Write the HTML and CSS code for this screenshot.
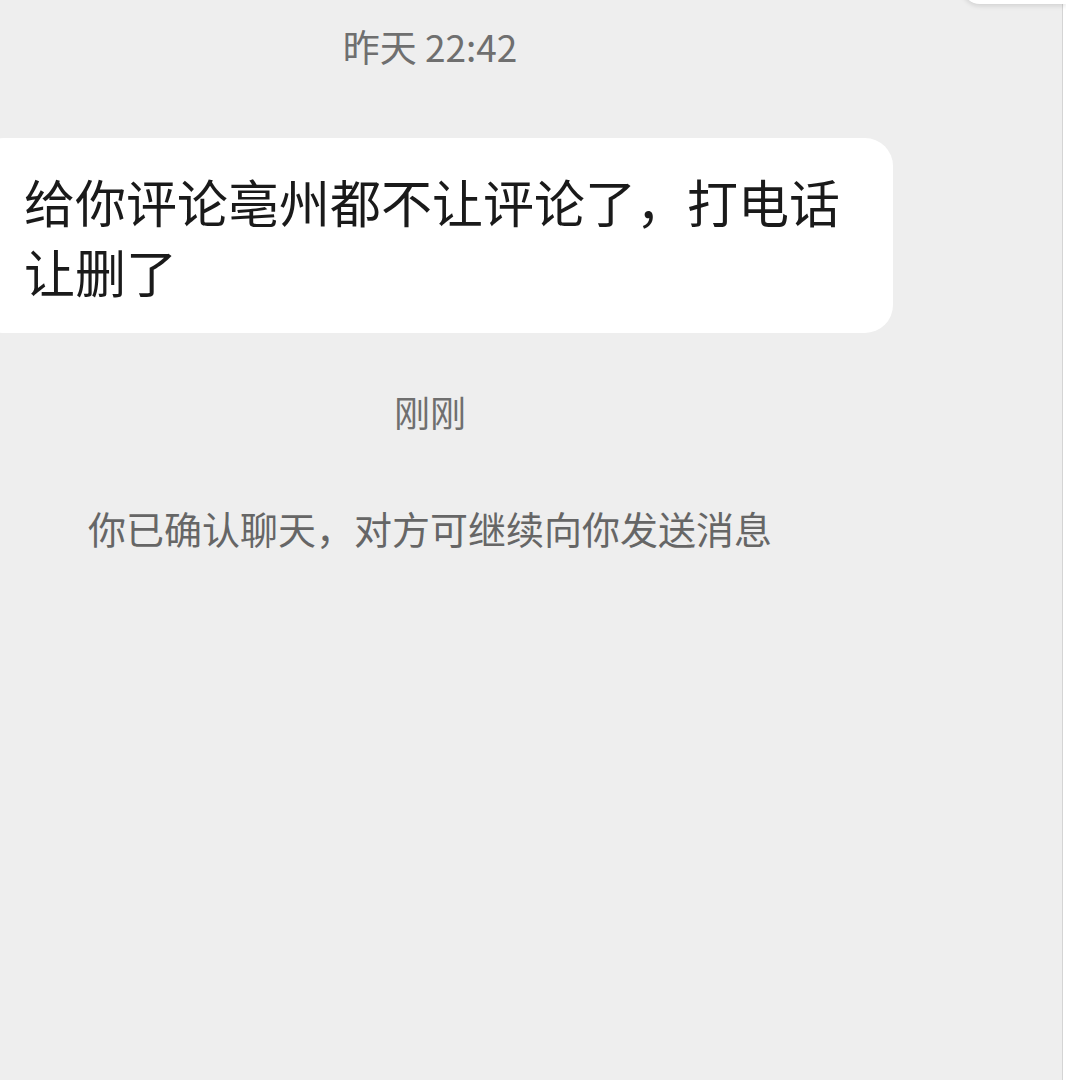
FILE: index.html
```html
<!DOCTYPE html>
<html lang="zh-CN">
<head>
    <meta charset="UTF-8">
    <meta name="viewport" content="width=device-width, initial-scale=1.0">
    <title>聊天</title>
    <link rel="stylesheet" href="styles.css">
</head>
<body>
    <div class="screen">
        <div class="chat">
            <div class="column">
                <p class="stamp">昨天 22:42</p>
                <div class="bubble">给你评论亳州都不让评论了，打电话让删了</div>
                <p class="stamp now">刚刚</p>
                <p class="notice">你已确认聊天，对方可继续向你发送消息</p>
            </div>
        </div>
        <div class="edge"></div>
        <div class="corner-card"></div>
    </div>
</body>
</html>
```

FILE: styles.css
```css
html, body {
    margin: 0;
    height: 100%;
    background: #eeeeee;
    overflow: hidden;
}
body {
    font-family: "Noto Sans CJK SC", "Noto Sans", sans-serif;
}
.screen {
    position: relative;
    display: flex;
    height: 1080px;
}
.chat {
    flex: 1;
    background: #eeeeee;
}
.column {
    width: 860px;
    padding-top: 24px;
    display: flex;
    flex-direction: column;
    align-items: center;
}
.stamp {
    margin: 0;
    font-size: 37px;
    line-height: 44px;
    color: #6f6f6f;
}
.bubble {
    align-self: flex-start;
    box-sizing: border-box;
    width: 917px;
    margin: 70px 0 0 -24px;
    padding: 28px 30px 27px 48px;
    background: #ffffff;
    border-radius: 28px;
    font-size: 51px;
    line-height: 70px;
    color: #1a1a1a;
}
.now {
    margin-top: 56px;
    font-size: 36px;
    line-height: 44px;
}
.notice {
    margin: 72px 0 0;
    font-size: 38px;
    line-height: 46px;
    color: #666666;
}
.edge {
    width: 3px;
    background: #ffffff;
    border-left: 1px solid #d4d4d4;
}
.corner-card {
    position: absolute;
    top: -20px;
    right: 0;
    width: 104px;
    height: 24px;
    background: #ffffff;
    border-bottom-left-radius: 18px;
    box-shadow: 0 2px 5px rgba(0,0,0,0.12);
}
```
